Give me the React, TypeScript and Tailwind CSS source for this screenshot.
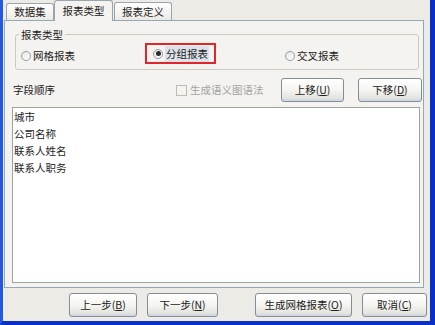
import { clsx as cn } from "clsx";

const ITEMS = ["城市", "公司名称", "联系人姓名", "联系人职务"];

function Radio({ checked }: { checked?: boolean }) {
  return (
    <span className="w-[10px] h-[10px] rounded-full border border-[#8d9cab] bg-linear-to-br from-[#e6e6e0] to-white flex items-center justify-center shrink-0">
      {checked && <span className="w-[5px] h-[5px] rounded-full bg-[#2a2a2a]" />}
    </span>
  );
}

function Btn({ label, k, className }: { label: string; k: string; className?: string }) {
  return (
    <button
      className={cn(
        "h-[24px] rounded-[3px] border border-[#858d96] bg-linear-to-b from-white via-[#f5f5f1] to-[#dedfd8] text-[10.5px] text-[#222] shadow-[inset_0_-2px_0_#d2d8e4,inset_0_1px_0_#fff] flex items-center justify-center",
        className
      )}
    >
      {label}(<span className="underline">{k}</span>)
    </button>
  );
}

export default function App() {
  return (
    <div className="w-[435px] h-[325px] bg-[#ecebe6] border-l-[3px] border-r-[5px] border-b-[4px] border-l-[#2358e0] border-r-[#0a2fc4] border-b-[#0a2fc4] flex flex-col font-['Noto_Sans_CJK_SC','Liberation_Sans',sans-serif] text-[10.5px] text-[#222]">
      {/* tabs */}
      <div className="h-[20px] flex items-end pl-[3px] relative z-10">
        <div className="w-[48px] h-[17px] rounded-t-[3px] border border-b-0 border-[#9aa6ae] bg-linear-to-b from-white to-[#ebeae4] flex items-center justify-center">
          数据集
        </div>
        <div className="w-[59px] h-[21px] -mb-px rounded-t-[3px] border border-b-0 border-[#9aa6ae] bg-[#f4f3ef] flex items-center justify-center">
          报表类型
        </div>
        <div className="w-[58px] h-[18px] ml-[1px] rounded-t-[3px] border border-b-0 border-[#9aa6ae] bg-linear-to-b from-white to-[#ebeae4] flex items-center justify-center">
          报表定义
        </div>
      </div>

      {/* panel */}
      <div className="ml-[1px] w-[420px] h-[268px] border border-[#93a9b8] bg-[#f4f3ef] flex flex-col">
        <fieldset className="ml-[10px] mt-[6px] w-[404px] h-[43px] border border-[#cbcbc3] rounded-[3px]">
          <legend className="ml-[3px] px-[2px] leading-[15px]">报表类型</legend>
          <div className="flex items-center h-[27px] pl-[5px]">
            <div className="flex items-center gap-[2px]">
              <Radio />
              <span>网格报表</span>
            </div>
            <div className="ml-[70px] -mt-[4px] h-[21px] border-2 border-[#e0262b] pl-[6px] pr-[5px] flex items-center gap-[2px]">
              <Radio checked />
              <span className="bg-[#dde2ea] px-[1px] leading-[16px]">分组报表</span>
            </div>
            <div className="ml-[69px] flex items-center gap-[2px]">
              <Radio />
              <span>交叉报表</span>
            </div>
          </div>
        </fieldset>

        <div className="mt-[8px] h-[24px] flex items-center pl-[8px] pr-[1px]">
          <span>字段顺序</span>
          <div className="ml-[121px] flex items-center gap-[3px] text-[#a3a3a0]">
            <span className="w-[11px] h-[11px] border border-[#bcbcb6] bg-[#f4f3ef]" />
            <span>生成语义图语法</span>
          </div>
          <div className="ml-auto flex gap-[14px]">
            <Btn label="上移" k="U" className="w-[63px]" />
            <Btn label="下移" k="D" className="w-[64px]" />
          </div>
        </div>

        <div className="mt-[5px] ml-[7px] w-[408px] h-[176px] border border-[#a2a2a0] bg-white pl-[1px]">
          {ITEMS.map((t) => (
            <div key={t} className="leading-[17px]">
              {t}
            </div>
          ))}
        </div>
      </div>

      {/* bottom buttons */}
      <div className="mt-[5px] flex">
        <Btn label="上一步" k="B" className="ml-[66px] w-[68px]" />
        <Btn label="下一步" k="N" className="ml-[10px] w-[71px]" />
        <Btn label="生成网格报表" k="O" className="ml-[37px] w-[97px]" />
        <Btn label="取消" k="C" className="ml-[10px] w-[65px]" />
      </div>
    </div>
  );
}
